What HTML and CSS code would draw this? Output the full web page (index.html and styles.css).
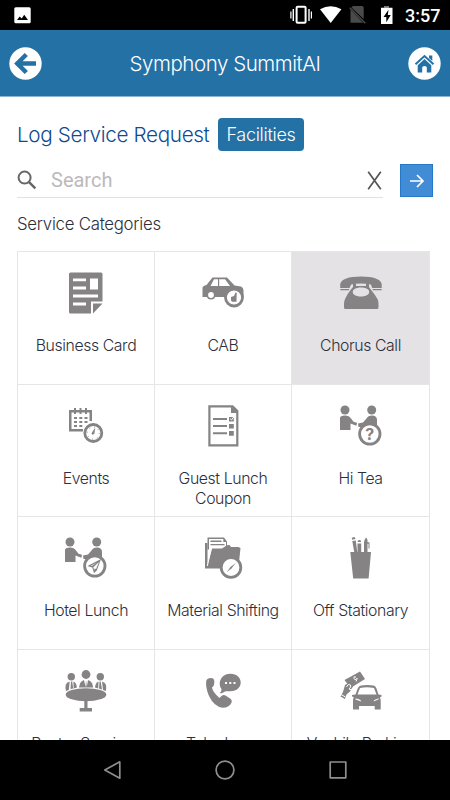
FILE: index.html
```
<!DOCTYPE html>
<html lang="en">
<head>
<meta charset="utf-8">
<title>Symphony SummitAI</title>
<link rel="stylesheet" href="styles.css">
</head>
<body>
<div class="screen">
  <div class="status">
    <svg class="shot" viewBox="0 0 17 17"><rect x=".3" y=".3" width="16.4" height="16" rx="1.5" fill="#fff"/><path d="M3 13l2.7-3.5 2 2 2.5-3.8L14 13z"/></svg>
    <svg class="tray" viewBox="0 0 106 20">
      <g fill="none" stroke="#fff"><rect x="6.6" y="1.8" width="9" height="16" rx="1" stroke-width="2"/><path d="M3.300 4v12M19 4v12" stroke-width="1.400"/><path d="M.9 6.500v7M21.400 6.500v7" stroke-width="1.200"/></g>
      <path d="M30 4.300Q40.700 -2 51.400 4.300L40.700 18z" fill="#fff"/>
      <path d="M63 1h9q1.700 0 1.700 1.700V14L61.500 2.500zM60.500 4.500L73 17.700H60.500z" fill="#4a4a4a"/><path d="M59.800 2.700l15.500 15.600" stroke="#4a4a4a" stroke-width="1.500"/>
      <path d="M94.500 1h4v1.800h4V19H91V2.800h3.500z" fill="#fff"/><path d="M94.500 1h4v1.800h-4z" fill="#777"/><path d="M98.500 4.800l-5 7.200h2.800v5.200l4.500-7.300h-3z"/>
    </svg>
    <span class="time">3:57</span>
  </div>
  <header class="bar">
    <svg class="round" viewBox="0 0 33 33"><circle cx="16.500" cy="16.500" r="16.200" fill="#fff"/><path d="M27 16.500H9M17.300 7.500L8.300 16.500l9 9" fill="none" stroke="#2471a6" stroke-width="4.500"/></svg>
    <h1>Symphony SummitAI</h1>
    <svg class="round" viewBox="0 0 33 33"><circle cx="16.500" cy="16.500" r="16.200" fill="#fff"/><path d="M7.500 17.300l9-8.200 9 8.200" fill="none" stroke="#2471a6" stroke-width="2"/><path d="M21 8.600h3.300v5.500L21 11zM9.700 18.200l6.800-6.100 6.800 6.100v7.200h-4.500v-4.800q0-1.500-2.300-1.500t-2.300 1.500v4.800H9.700z" fill="#2471a6"/></svg>
  </header>
  <main class="content">
    <div class="heading"><h2>Log Service Request</h2><span class="tag">Facilities</span></div>
    <div class="searchrow">
      <div class="search">
        <svg class="lens" viewBox="0 0 20 20"><circle cx="7.600" cy="7.600" r="6" fill="none" stroke="#666" stroke-width="2"/><path d="M11.800 11.800l6.500 6.500" stroke="#666" stroke-width="2.500"/></svg>
        <span class="hint">Search</span>
        <svg class="clear" viewBox="0 0 15 19"><path d="M1.200 .8l12.600 17.400M13.800 .8L1.200 18.200" stroke="#555" stroke-width="1.700"/></svg>
      </div>
      <span class="go"><svg viewBox="0 0 16 16"><path d="M1 8h13M8 2l6 6-6 6" fill="none" stroke="#fff" stroke-width="1.700"/></svg></span>
    </div>
    <h3>Service Categories</h3>
    <div class="grid">
      <div class="cell"><svg viewBox="0 0 42 42"><path fill-rule="evenodd" d="M5.500 .5H36q1.500 0 1.500 1.500v27.500H26V41.500H5.500Q4 41.500 4 40V2Q4 .5 5.500 .5zM8 6.500v2.700h13V6.500zm0 8v3h13v-3zM25 6.500v11h8v-11zM8 22.500v3h25v-3zm0 8v3h13v-3z"/><path d="M28 31.500h9.500L28 41.500z"/></svg><span>Business Card</span></div>
      <div class="cell"><svg viewBox="0 0 42 42"><path fill-rule="evenodd" d="M10.500 5.500H25l7.500 8 6.500 1q2.500 1 2.500 4V25H.5V16q0-2 4-3zM12 7.300L8.500 14H16V7.300zm5.200 0V14H28l-5-6.700z"/><circle cx="9" cy="23" r="4.600"/><circle class="w" cx="9" cy="23" r="2.900"/><circle class="ring" cx="32" cy="25.500" r="8.500"/><path d="M29 25l3-1 1.500-3.500 1.200.3-.2 9h-4.300l-1.200-1.300z"/></svg><span>CAB</span></div>
      <div class="cell on"><svg viewBox="0 0 42 42"><path d="M.2 16V12Q2 4.500 21 4.500T41.700 12v4h-9.500l-1.300-3.500q-9.900-2-19.800 0L9.500 16z"/><path d="M.3 17h9l-.5 1.300H.3zM32.500 17h9.200v1.300H33z"/><path fill-rule="evenodd" d="M13 11.500h3V14h10v-2.500h3V15q1 1.500 3 4 3.500 4.500 5.500 8 1 2 1 4.500v4q0 1.500-1.500 1.500H5.500Q4 37 4 35.500v-4Q4 29 5.500 26q2-4 5-8l2.500-3zM21 15.500c-11 0-11 9 0 9s11-9 0-9z"/></svg><span>Chorus Call</span></div>

      <div class="cell"><svg viewBox="0 0 42 42"><path d="M4 5h23v11h-2.500V7.500h-18V24H18v2.500H4z"/><path d="M9 3h2v6H9zM14.500 3h2v6h-2zM20 3h2v6h-2zM9 12h3v2H9zm5.300 0h3v2h-3zm5.200 0h3v2h-3zM9 16h3v2H9zm5.300 0h3v2h-3zm5.200 0h3v2h-3zM9 20h3v2H9zm5.300 0h3v2h-3z"/><circle class="ring" cx="28.300" cy="28" r="8.500"/><path d="M30.300 22.500l-1 6.500-2 .7-.8-1.500z"/><circle class="dots" cx="28.300" cy="28" r="6"/></svg><span>Events</span></div>
      <div class="cell"><svg viewBox="0 0 42 42"><path fill-rule="evenodd" d="M6.300 .3H31l5.400 5.300v36H6.300zM8.500 2.500v36.700h25.700V8H29V2.500z"/><path d="M11 13h14v2H11zm0 7h14v2H11zm0 7.300h14v2H11zM27 19h4.800v4.500H27zm0 7h4.800v4.800H27zM27 12h4.800v4.500H27z"/><path class="line" d="M28.200 13.600l1.300 1.300 2.300-3"/></svg><span>Guest Lunch Coupon</span></div>
      <div class="cell"><svg viewBox="0 0 42 42"><use href="#meet"/><text x="29.700" y="35" text-anchor="middle">?</text></svg><span>Hi Tea</span></div>

      <div class="cell"><svg viewBox="0 0 42 42"><g id="meet"><circle cx="5" cy="5" r="4.500"/><circle cx="31.700" cy="5" r="4.500"/><path d="M0 25V13q0-2.500 5-2.500 4 0 6 3l2.500 3.200 3.500 1-.6 3L10.500 18.500V25zM26.500 13.500q1.500-3 5.500-3 5 0 5 4.500v7H18.500l-.5-3.500 5-1z"/><circle class="ring" cx="29.800" cy="29" r="10.200"/></g><path fill-rule="evenodd" d="M36 22L22.500 29l4.700 1.500L29 36l2.800-2.600zM34 25l-3 7-1.200-.4-.7 1.300-.8-2.700zM32 25.500L26.700 29l-1-.3z"/></svg><span>Hotel Lunch</span></div>
      <div class="cell"><svg viewBox="0 0 42 42"><path d="M5.500 .5H22l3 4v8H5.500z"/><path class="w" d="M7 2h14.300v3H24v8H7z"/><path d="M8.500 3.500h11V5h-11zm0 3.500h14v1.300h-14zM3 6h2.500v22L10 11.500h10l3-2q1.500-2 4.500-1.500l1.500 2h7.500l2 1L36.500 30 18 31.500H3z"/><path class="line" d="M9.300 11.500L5.300 29"/><circle class="ring" cx="29" cy="30.500" r="9.800"/><path d="M33.500 26.300l-4 5.200-4.800 3.500 4-5.200z"/></svg><span>Material Shifting</span></div>
      <div class="cell"><svg viewBox="0 0 42 42"><path d="M10.300 15H31l-2.400 26.500H13.200zM11.700 .8l3-.8.8 2-3.300.8zM12.300 4l3.500-.6 1.500 12h-3zM17.700 3.700q1.800-1.200 3.300 0V5h-3.300zM17.500 6.500h3.700V15h-3.700zM25 2l1.300-1.500L27.500 3v2l2 .5v6h-1v-4.700h-1V15H24V5z"/></svg><span>Off Stationary</span></div>

      <div class="cell"><svg viewBox="0 0 42 42"><circle cx="6.300" cy="6.700" r="3.700"/><circle cx="21" cy="4.500" r="4.400"/><circle cx="35.300" cy="6.700" r="3.700"/><path d="M14 17.500l1-4q.8-2.500 4-3.500l1.500 7 .5-6.700.8 6.700 1.200-7q3.500 1 4.200 3.500l1 4zM1 21q-1-3-.3-6 .8-3 4-3.500L3.800 20zm4.500-2l.5-7.500 1.200 0 1 7zm3.200-.5L8.400 11.500q3 1 3.500 6zM30 17.500q.5-5 3.500-6l-.3 7zm4 1l.5-7h1.200l1.300 8zm4 1.500l-1-8.500q3 .5 4 3.500.6 3-.2 6z"/><ellipse cx="21" cy="24.700" rx="20.300" ry="6.500"/><path d="M19.300 30h3.200v8H27v3.500H14.700V38h4.600z"/></svg><span>Pantry Services</span></div>
      <div class="cell"><svg viewBox="0 0 42 42"><path d="M4.200 11Q5 8 9 8q3 0 3.300 3 .3 5-2.300 6.500.5 4.500 7.500 10.500l2-2q2-1.500 4-.5l5 3.200q2 1.500 1 4-2.500 5-9 5Q12 36.500 7 26 3.500 18 4.200 11z"/><path d="M28.200 3.800c14 0 14 17.500 0 17.500-3 0-5-.6-6.500 1-1.500 1-3 1-4 .7q2.500-1.500 1.500-4.500c-4-6 .5-14.700 9-14.700z"/><path class="w" d="M23 12h2v2h-2zm4.300 0h2v2h-2zm4.200 0h2v2h-2z"/></svg><span>Telephone</span></div>
      <div class="cell"><svg viewBox="0 0 42 42"><path d="M4.500 10L20 1.500 25 9 10.500 18z"/><path d="M5 15l5-3 3 4.500-3 5-3.500 3L5 29l-4.500-2.500L3 22z"/><path class="line" d="M6.500 17q1.500-4 4-2 1 2-1.500 4 2 2 4-1M1 24.500l4.500 2.500M16 7q-3-1-2 1.500t2.500.3-.5 2.700"/><path fill-rule="evenodd" d="M12 25l3.500-.5 2.200-6Q18.500 16 21 15.500q6-1 12.500 0 2 .3 3 3l2 6 3 .5v1.700l-1.500.3.7 3v9.500h-6V36H19v3.500h-6V30l.7-3-1.700-.5zM17.500 24.500h19L34 18q-7-1.700-14 0zM15 29.200l6 2.300q.5-2-5-3zM39 28.500q-5.500 1-5.300 3l5.500-2.500z"/></svg><span>Vechile Parking</span></div>
    </div>
  </main>
  <nav class="nav">
    <svg viewBox="0 0 20 20"><path d="M16.800 1.800v16.400L1.800 10z"/></svg>
    <svg viewBox="0 0 20 20"><circle cx="10" cy="10" r="8.900"/></svg>
    <svg viewBox="0 0 20 20"><rect x="2.200" y="2" width="15.600" height="15.800"/></svg>
  </nav>
</div>
</body>
</html>
```
FILE: styles.css
```
* { box-sizing: border-box; margin: 0; }
body { width: 450px; height: 800px; overflow: hidden; font-family: Inter, sans-serif; font-weight: 300; color: #2c2f3c; background: #fff; }
.screen { display: flex; flex-direction: column; height: 800px; }
.status { height: 30px; background: #000; display: flex; align-items: center; padding: 0 10px 0 14px; }
.shot { width: 17px; height: 17px; }
.tray { width: 106px; height: 20px; margin: 0 9px 0 auto; }
.time { color: #fff; font: 500 18px/30px Roboto, sans-serif; width: 35px; white-space: nowrap; padding-top: 1px; }
.bar { height: 67px; flex-shrink: 0; background: #2471a6; border-bottom: 1px solid #8eb4d0; display: flex; align-items: center; justify-content: space-between; padding: 0 9px; }
.round { width: 33px; height: 33px; }
.bar h1 { color: #fff; font-size: 20.5px; font-weight: 300; letter-spacing: -.45px; }
.content { height: 643px; overflow: hidden; padding: 20px 16px 0 17px; flex-shrink: 0; }
.heading { display: flex; align-items: center; height: 34px; gap: 9px; }
.heading h2 { color: #0e4b92; font-size: 20.700px; font-weight: 300; letter-spacing: -.35px; white-space: nowrap; width: 192px; }
.tag { height: 33px; width: 86px; border-radius: 4px; background: #2471a6; color: #fff; font-size: 18px; line-height: 33px; text-align: center; letter-spacing: -.3px; }
.searchrow { display: flex; margin-top: 13px; height: 34px; gap: 17px; }
.search { width: 366px; border-bottom: 1px solid #e2e2e2; display: flex; align-items: center; padding-bottom: 1px; }
.lens { width: 20px; height: 20px; }
.hint { margin-left: 14px; color: #bcb9bb; font: 400 20px/30px Roboto, sans-serif; }
.clear { width: 15px; height: 19px; margin: 0 1px 0 auto; }
.go { width: 33px; height: 33px; background: #428cd6; border: 1px solid #2478c8; display: flex; align-items: center; justify-content: center; }
.go svg { width: 16px; height: 16px; }
h3 { font-size: 16.800px; line-height: 24px; font-weight: 300; margin-top: 14px; letter-spacing: -.25px; }
.grid { display: grid; grid-template-columns: 137px 137px 138px; grid-auto-rows: 132.5px; margin-top: 15px; width: 413px; border-left: 1px solid #e6e6e6; border-top: 1px solid #e6e6e6; }
.cell { border-right: 1px solid #e6e6e6; border-bottom: 1px solid #e6e6e6; display: flex; flex-direction: column; align-items: center; padding-top: 20px; }
.cell.on { background: #e5e2e6; }
.cell svg { width: 42px; height: 42px; fill: #858384; flex-shrink: 0; }
.cell .w { fill: #fff; }
.cell .ring { fill: #fff; stroke: #858384; stroke-width: 2.8; }
.cell .dots { fill: none; stroke: #858384; stroke-width: 1; stroke-dasharray: .8 3.91; }
.cell .line { fill: none; stroke: #fff; stroke-width: 1; }
.cell text { font: 700 16px Inter, sans-serif; }
.cell span { font-size: 15.800px; line-height: 20px; margin-top: 22px; text-align: center; letter-spacing: -.4px; width: 120px; }
.nav { height: 60px; background: #000; display: flex; justify-content: center; align-items: center; gap: 92.500px; }
.nav svg { width: 20px; height: 20px; fill: none; stroke: #8e8e8e; stroke-width: 1.700; stroke-linejoin: round; }
```
